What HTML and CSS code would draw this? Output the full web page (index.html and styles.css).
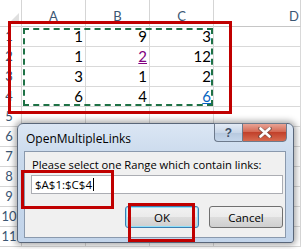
FILE: index.html
```html
<!DOCTYPE html>
<html>
<head>
<meta charset="utf-8">
<link rel="stylesheet" href="styles.css">
</head>
<body>
<div class="sheet">
  <div class="corner"><span class="tri"></span></div>
  <div class="ch">A</div><div class="ch">B</div><div class="ch">C</div><div class="ch chd">D</div>

  <div class="rh">1</div><div class="c">1</div><div class="c">9</div><div class="c">3</div><div class="c"></div>
  <div class="rh">2</div><div class="c">1</div><div class="c"><span class="visited">2</span></div><div class="c">12</div><div class="c"></div>
  <div class="rh">3</div><div class="c">3</div><div class="c">1</div><div class="c">2</div><div class="c"></div>
  <div class="rh">4</div><div class="c">6</div><div class="c">4</div><div class="c"><span class="link">6</span></div><div class="c"></div>
  <div class="rh">5</div><div class="c"></div><div class="c"></div><div class="c"></div><div class="c"></div>
  <div class="rh">6</div><div class="c"></div><div class="c"></div><div class="c"></div><div class="c"></div>
  <div class="rh">7</div><div class="c"></div><div class="c"></div><div class="c"></div><div class="c"></div>
  <div class="rh">8</div><div class="c"></div><div class="c"></div><div class="c"></div><div class="c"></div>
  <div class="rh">9</div><div class="c"></div><div class="c"></div><div class="c"></div><div class="c"></div>
  <div class="rh">10</div><div class="c"></div><div class="c"></div><div class="c"></div><div class="c"></div>
  <div class="rh">11</div><div class="c"></div><div class="c"></div><div class="c"></div><div class="c"></div>
</div>

<div class="marquee"></div>
<div class="anno anno-range"></div>

<div class="dialog">
  <div class="titlebar">
    <span class="title">OpenMultipleLinks</span>
    <div class="caption-btns">
      <div class="cap cap-help">?</div>
      <div class="cap cap-close">
        <svg width="14" height="11" viewBox="0 0 14 11"><path d="M2 1.5 L12 9.5 M12 1.5 L2 9.5" stroke="#3c3c3c" stroke-width="4" stroke-linecap="round" opacity="0.5"/><path d="M2.5 1.5 L11.5 9.5 M11.5 1.5 L2.5 9.5" stroke="#fff" stroke-width="2.6" stroke-linecap="round"/></svg>
      </div>
    </div>
  </div>
  <div class="client">
    <div class="label">Please select one Range which contain links:</div>
    <div class="input"><span class="val">$A$1:$C$4</span><span class="caret"></span></div>
    <div class="buttons">
      <div class="btn btn-default">OK</div>
      <div class="btn">Cancel</div>
    </div>
  </div>
</div>

<div class="anno anno-input"></div>
<div class="anno anno-ok"></div>
</body>
</html>
```

FILE: styles.css
```css
html, body {
  margin: 0;
  padding: 0;
  background: #fff;
  overflow: hidden;
}
body {
  width: 301px;
  height: 249px;
  position: relative;
}
.sheet {
  display: grid;
  grid-template-columns: 22px 64px 64px 64px 87px;
  grid-template-rows: 27px repeat(11, 20px);
  height: 249px;
  overflow: hidden;
  font-family: "Lato", "Liberation Sans", sans-serif;
}
.corner {
  border-right: 1px solid #d5d5d5;
  border-bottom: 1px solid #d5d5d5;
  position: relative;
  box-sizing: border-box;
}
.tri {
  position: absolute;
  right: 2px;
  bottom: 2px;
  width: 0;
  height: 0;
  border-left: 11px solid transparent;
  border-bottom: 11px solid #dfdfdf;
}
.ch {
  border-right: 1px solid #d5d5d5;
  border-bottom: 1px solid #c6c6c6;
  box-sizing: border-box;
  display: flex;
  align-items: flex-end;
  justify-content: center;
  padding-bottom: 2px;
  font-size: 13px;
  color: #3b5673;
}
.chd { justify-content: flex-end; padding-right: 1px; }
.rh {
  border-right: 1px solid #d5d5d5;
  border-bottom: 1px solid #d5d5d5;
  box-sizing: border-box;
  display: flex;
  align-items: flex-end;
  justify-content: center;
  padding-right: 3px;
  padding-bottom: 2px;
  font-size: 13px;
  color: #3b5673;
}
.c {
  border-right: 1px solid #d9d9d9;
  border-bottom: 1px solid #d9d9d9;
  box-sizing: border-box;
  display: flex;
  align-items: flex-end;
  justify-content: flex-end;
  padding-right: 2px;
  padding-bottom: 1px;
  font-size: 15px;
  color: #000;
}
.visited { color: #800080; text-decoration: underline; }
.link { color: #0563c1; text-decoration: underline; }

.marquee {
  position: absolute;
  left: 23px;
  top: 28px;
  width: 190px;
  height: 78px;
  border: 2px dashed #1e7145;
  box-sizing: border-box;
}
.anno {
  position: absolute;
  border: 3px solid #c00000;
  box-sizing: border-box;
}
.anno-range { left: 8px; top: 21px; width: 224px; height: 93px; }
.anno-input { left: 21px; top: 170px; width: 93px; height: 39px; }
.anno-ok { left: 128px; top: 203px; width: 67px; height: 39px; }

.dialog {
  position: absolute;
  left: 17px;
  top: 123px;
  width: 277px;
  height: 120px;
  box-sizing: border-box;
  border: 1px solid #596679;
  border-radius: 6px 6px 3px 3px;
  background: linear-gradient(#dbe6f4, #c9d9ec 30%, #c2d4ea);
  box-shadow: 0 0 6px 2px rgba(0,0,0,0.35);
  display: flex;
  flex-direction: column;
  padding: 0 7px 4px 6px;
  font-family: "Open Sans", "Noto Sans", sans-serif;
}
.titlebar {
  height: 27px;
  display: flex;
  align-items: center;
  position: relative;
}
.title {
  font-size: 12px;
  color: #000;
  padding-left: 2px;
  padding-top: 2px;
}
.caption-btns {
  position: absolute;
  right: -1px;
  top: -1px;
  display: flex;
}
.cap {
  height: 19px;
  box-sizing: border-box;
  border: 1px solid #6d7a8c;
  display: flex;
  align-items: center;
  justify-content: center;
}
.cap-help {
  width: 28px;
  border-right: none;
  border-radius: 0 0 0 4px;
  background: linear-gradient(#e3ebf5, #c8d6e8 50%, #b6c8de 51%, #c5d6ea);
  font-family: "Liberation Sans", sans-serif;
  font-weight: bold;
  font-size: 12px;
  color: #3d4f66;
}
.cap-close {
  width: 45px;
  border-radius: 0 0 4px 0;
  background: linear-gradient(#e8a395, #d46a55 45%, #c2412b 50%, #d66a4f);
}
.client {
  flex: 1;
  background: #f0f0f0;
  border: 1px solid #8a99ad;
  display: flex;
  flex-direction: column;
  padding: 5px 1px 0 6px;
  font-size: 11.2px;
  color: #000;
}
.label {
  height: 16px;
  line-height: 16px;
  padding-left: 1px;
}
.input {
  margin-top: 2px;
  height: 19px;
  box-sizing: border-box;
  border: 1px solid #abadb3;
  background: #fff;
  display: flex;
  align-items: center;
  padding-left: 3px;
  margin-right: 1px;
  font-size: 11.5px;
}
.val { line-height: 14px; }
.caret {
  width: 1px;
  height: 13px;
  background: #000;
  margin-left: 1px;
}
.buttons {
  display: flex;
  justify-content: flex-end;
  gap: 10px;
  margin-top: 12px;
  margin-right: 1px;
}
.btn {
  width: 74px;
  height: 22px;
  box-sizing: border-box;
  border: 1px solid #707070;
  border-radius: 3px;
  background: linear-gradient(#f2f2f2, #ebebeb 50%, #dddddd 51%, #cfcfcf);
  display: flex;
  align-items: center;
  justify-content: center;
  font-size: 11.5px;
}
.btn-default {
  border-color: #3c7fb1;
  box-shadow: inset 0 0 0 1px #8fe0fa;
  background: linear-gradient(#f2f2f2, #ebebeb 50%, #dddddd 51%, #cfcfcf);
}
```
